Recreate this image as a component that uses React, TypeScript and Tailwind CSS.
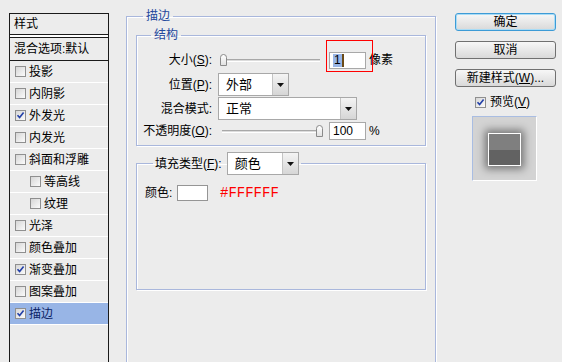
import React from "react";

const items = [
  { label: "投影", checked: false, nested: false },
  { label: "内阴影", checked: false, nested: false },
  { label: "外发光", checked: true, nested: false },
  { label: "内发光", checked: false, nested: false },
  { label: "斜面和浮雕", checked: false, nested: false },
  { label: "等高线", checked: false, nested: true },
  { label: "纹理", checked: false, nested: true },
  { label: "光泽", checked: false, nested: false },
  { label: "颜色叠加", checked: false, nested: false },
  { label: "渐变叠加", checked: true, nested: false },
  { label: "图案叠加", checked: false, nested: false },
  { label: "描边", checked: true, nested: false, active: true },
];

function Check({ checked = false }: { checked?: boolean }) {
  return (
    <span className="w-[11px] h-[11px] shrink-0 border border-[#8f8f8f] bg-gradient-to-br from-[#d6d6d6] to-[#fbfbfb] flex items-center justify-center">
      {checked ? (
        <svg width="9" height="9" viewBox="0 0 9 9">
          <path d="M1.5 4.2 L3.6 6.6 L7.6 1.4" fill="none" stroke="#2340a8" strokeWidth="1.6" />
        </svg>
      ) : null}
    </span>
  );
}

function Select({ width, text }: { width: string; text: string }) {
  return (
    <div className={`${width} h-[23px] shrink-0 border border-[#a8a8a8] bg-white flex items-stretch`}>
      <span className="flex-1 pl-[7px] flex items-center text-[13px] leading-[16px]">{text}</span>
      <span className="w-[16px] border-l border-[#c4c4c4] bg-gradient-to-b from-[#f4f4f4] to-[#d6d6d6] flex items-center justify-center">
        <svg width="7" height="4" viewBox="0 0 7 4">
          <path d="M0 0 H7 L3.5 4 Z" fill="#111" />
        </svg>
      </span>
    </div>
  );
}

function Slider({ value }: { value: "min" | "max" }) {
  return (
    <div className="relative w-[106px] h-[14px] shrink-0">
      <div className="absolute left-[2px] right-[6px] top-[6px] h-[3px] border-t border-[#a8a8a8] bg-[#dcdcdc] border-b border-b-white" />
      <div
        className={`absolute top-[1px] w-[7px] h-[12px] rounded-t-[4px] border border-[#8a8a8a] bg-gradient-to-b from-white to-[#e2e2e2] ${
          value === "min" ? "left-0" : "left-[96px]"
        }`}
      />
    </div>
  );
}

export default function App() {
  return (
    <div className="w-[562px] h-[362px] overflow-hidden bg-[#ececec] flex items-start text-black font-['Liberation_Sans','Noto_Sans_CJK_SC',sans-serif] text-[12px] leading-[16px]">
      {/* left style list */}
      <div className="ml-[9px] mt-[13px] w-[100px] h-[360px] shrink-0 border border-[#1a1a1a] bg-[#ececec]">
        <div className="h-[21px] border-b border-[#1a1a1a] pl-[4px] flex items-center">样式</div>
        <div className="h-[2px] bg-white" />
        <div className="h-[24px] border-y border-[#1a1a1a] pl-[4px] flex items-center">混合选项:默认</div>
        {items.map((it) => (
          <div
            key={it.label}
            className={`h-[22px] border-b border-white flex items-center gap-[3px] ${
              it.nested ? "pl-[20px]" : "pl-[5px]"
            } ${it.active ? "bg-[#98b5e6] text-[#0c2466]" : ""}`}
          >
            <Check checked={it.checked} />
            <span>{it.label}</span>
          </div>
        ))}
      </div>

      {/* stroke settings */}
      <fieldset className="ml-[17px] mt-[8px] w-[310px] h-[400px] shrink-0 border border-[#a9b7dc] shadow-[1px_1px_0_#fff,inset_1px_1px_0_#fff] pl-[9px] pr-[8px]">
        <legend className="ml-[7px] px-[3px] text-[#23479c]">描边</legend>

        <fieldset className="mt-[3px] w-[290px] border border-[#a9b7dc] shadow-[1px_1px_0_#fff,inset_1px_1px_0_#fff] pb-[3px]">
          <legend className="ml-[14px] px-[3px] text-[#23479c]">结构</legend>

          <div className="mt-[6px] h-[22px] flex items-center">
            <span className="w-[75px] text-right">
              大小(<u>S</u>):
            </span>
            <span className="ml-[8px]">
              <Slider value="min" />
            </span>
            <div className="relative ml-[3px] w-[37px] h-[17px] border border-[#a8a8a8] bg-white flex items-center pl-[3px]">
              <span className="bg-[#98b5e6] px-[1px] leading-[13px]">1</span>
              <span className="w-[2px] h-[13px] bg-[#6b4a16]" />
              <div className="absolute -left-[4px] -top-[13px] w-[47px] h-[32px] border border-[#ff0000]" />
            </div>
            <span className="ml-[3px]">像素</span>
          </div>

          <div className="mt-[2px] h-[23px] flex items-center">
            <span className="w-[75px] text-right">
              位置(<u>P</u>):
            </span>
            <span className="ml-[6px]">
              <Select width="w-[71px]" text="外部" />
            </span>
          </div>

          <div className="mt-[1px] h-[23px] flex items-center">
            <span className="w-[75px] text-right">混合模式:</span>
            <span className="ml-[6px]">
              <Select width="w-[139px]" text="正常" />
            </span>
          </div>

          <div className="h-[22px] flex items-center">
            <span className="w-[75px] text-right">
              不透明度(<u>O</u>):
            </span>
            <span className="ml-[8px]">
              <Slider value="max" />
            </span>
            <div className="ml-[3px] w-[37px] h-[18px] border border-[#a8a8a8] bg-white flex items-center pl-[3px]">
              100
            </div>
            <span className="ml-[3px]">%</span>
          </div>
        </fieldset>

        <fieldset className="mt-[6px] w-[290px] border border-[#a9b7dc] shadow-[1px_1px_0_#fff,inset_1px_1px_0_#fff]">
          <legend className="ml-[16px] px-[2px] flex items-center gap-[5px]">
            <span>
              填充类型(<u>F</u>):
            </span>
            <Select width="w-[72px]" text="颜色" />
          </legend>
          <div className="h-[114px] pt-[10px] pl-[8px]">
            <div className="h-[16px] flex items-center">
              <span className="w-[28px]">颜色:</span>
              <span className="ml-[4px] w-[31px] h-[16px] border border-[#959595] bg-white" />
              <span className="ml-[12px] text-[#ff0000] font-['Liberation_Mono',monospace] text-[14px]">#FFFFFF</span>
            </div>
          </div>
        </fieldset>
      </fieldset>

      {/* buttons and preview */}
      <div className="ml-[19px] mt-[13px] w-[101px] shrink-0 flex flex-col">
        <button className="h-[18px] rounded-[3px] border border-[#3d9bd6] shadow-[inset_0_0_0_1px_#a9dcf6] bg-gradient-to-b from-[#f7f7f7] to-[#d9d9d9] flex items-center justify-center">
          确定
        </button>
        <button className="mt-[10px] h-[18px] rounded-[3px] border border-[#707070] bg-gradient-to-b from-[#f7f7f7] to-[#d9d9d9] flex items-center justify-center">
          取消
        </button>
        <button className="mt-[10px] h-[18px] rounded-[3px] border border-[#707070] bg-gradient-to-b from-[#f7f7f7] to-[#d9d9d9] flex items-center justify-center">
          新建样式(<u>W</u>)...
        </button>
        <div className="mt-[9px] h-[12px] pl-[20px] flex items-center gap-[4px]">
          <Check checked />
          <span>
            预览(<u>V</u>)
          </span>
        </div>
        <div className="mt-[8px] ml-[17px] w-[65px] h-[65px] border-l border-t border-[#a9bde2] border-r border-b border-r-white border-b-white bg-[#d3d3d3] pl-[15px] pt-[16px]">
          <div className="w-[33px] h-[33px] border border-white shadow-[0_0_8px_3px_rgba(0,0,0,0.45)] flex flex-col">
            <div className="flex-1 bg-[#7f7f7f]" />
            <div className="flex-1 bg-[#626262]" />
          </div>
        </div>
      </div>
    </div>
  );
}
